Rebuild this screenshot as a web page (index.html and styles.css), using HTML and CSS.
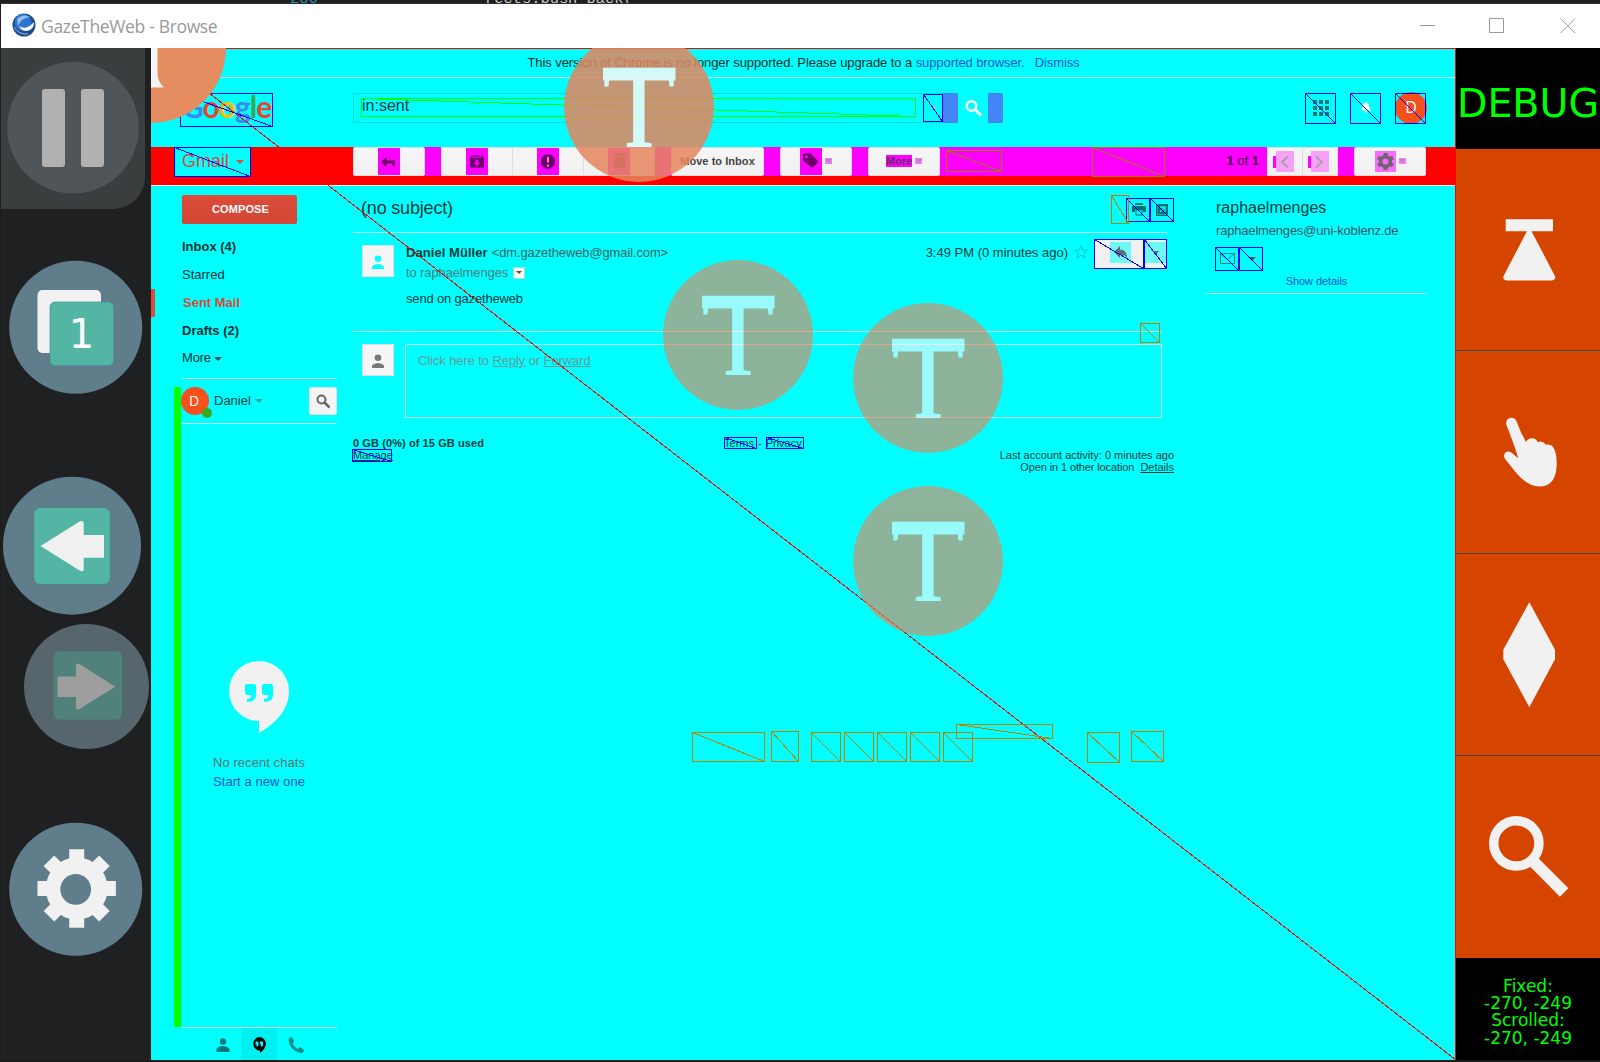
FILE: index.html
```html
<!DOCTYPE html>
<html lang="en">
<head>
<meta charset="utf-8">
<title>GazeTheWeb - Browse</title>
<link rel="stylesheet" href="styles.css">
</head>
<body>
<div class="desktop">
  <div class="editor"><span class="lineno">236</span><span class="code">rects.push_back(</span></div>
  <div class="window">
    <header class="titlebar">
      <svg class="appicon" viewBox="0 0 24 24"><circle cx="12" cy="12" r="11.500" fill="#1d4a92"/><circle cx="11" cy="9.500" r="8.500" fill="#2f74cf"/><path d="M5 6Q11 0 18 4Q9 5 6 13Z" fill="#8fbdf2"/><path d="M7 13Q14 18 22 9Q22 17 15 18Q9 18 7 13Z" fill="#f4f8ff"/><path d="M2 14Q7 22 16 21" stroke="#9bb9e0" fill="none"/></svg>
      <span class="title">GazeTheWeb - Browse</span>
      <svg class="winctl" viewBox="1420 17 156 17"><g fill="none" stroke="#999"><path d="M1420 25.500h15M1489.500 18.500h14v14h-14z"/><path d="M1560.500 18.500l14.500 14.500M1575 18.500l-14.500 14.500"/></g></svg>
    </header>
    <div class="body">
      <aside class="side">
        <svg class="pause" viewBox="1 48 144 161"><circle cx="73" cy="127.700" r="65.800" fill="#50555a"/><g fill="#b1b1b1"><rect x="42" y="89" width="23" height="78" rx="3"/><rect x="81" y="89" width="23" height="78" rx="3"/></g></svg>
        <svg viewBox="1 209 150 231" height="231"><circle cx="75.700" cy="327.300" r="66.500" fill="#607d8b"/><rect x="37.500" y="290" width="63.500" height="63" rx="5" fill="#f1f1f1"/><rect x="50" y="302" width="63.500" height="63.500" rx="5" fill="#53b6a5" stroke="#4a8f8b" stroke-width=".7"/><text class="tabcount" x="81.500" y="348" text-anchor="middle">1</text></svg>
        <svg viewBox="1 440 150 179" height="179"><circle cx="72" cy="545.700" r="69" fill="#607d8b"/><rect x="33.700" y="507.500" width="76.700" height="77" rx="7" fill="#53b6a5" stroke="#4a7f85" stroke-width=".7"/><path d="M40.500 546L80 521.300Q83.700 520 83.700 523.500V535H104V557.700H83.700V569.500Q83.700 572 80 570.700Z" fill="#f1f1f1"/></svg>
        <svg viewBox="1 619 150 161" height="161"><circle cx="86.500" cy="686.500" r="62.500" fill="#57666d"/><rect x="53" y="650.700" width="69.500" height="69.500" rx="6.500" fill="#50817a" stroke="#4b6a6a" stroke-width=".7"/><path d="M115.300 686.700L79.500 664Q76 662.500 76 666V676.500H57.500V697H76V707.500Q76 710.500 79.500 709Z" fill="#9e9e9e"/></svg>
        <svg viewBox="1 780 150 280" height="280"><circle cx="75.700" cy="889.300" r="66.500" fill="#607d8b"/><g fill="#f1f1f1" transform="translate(76.700 888.500)"><circle r="31"/><path d="M-7.500 -39.200h15V39.200h-15z"/><path d="M-7.500 -39.200h15V39.200h-15z" transform="rotate(45)"/><path d="M-7.500 -39.200h15V39.200h-15z" transform="rotate(90)"/><path d="M-7.500 -39.200h15V39.200h-15z" transform="rotate(135)"/></g><circle cx="75.700" cy="889.300" r="15.400" fill="#607d8b"/></svg>
      </aside>

      <main class="web">
        <div class="notice"><span class="ntext">This version of Chrome is no longer supported. Please upgrade to a <a>supported browser</a><a>.</a></span><a class="dismiss">Dismiss</a></div>
        <div class="head">
          <div class="logo"><span class="b">G</span><span class="r">o</span><span class="y">o</span><span class="b">g</span><span class="g">l</span><span class="r">e</span></div>
          <div class="search">in:sent</div>
          <svg class="drop" viewBox="0 0 20 30"><path d="M7 13h7l-3.500 4z" fill="#aabdbd"/></svg>
          <div class="sbtn"><svg viewBox="0 0 30 30"><circle cx="13.500" cy="13" r="4.800" fill="none" stroke="#fff" stroke-width="2.500"/><path d="M17 16.500l6 6" stroke="#fff" stroke-width="3"/></svg></div>
          <svg class="apps" viewBox="0 0 16 16"><path d="M0 0h4v4H0zM6 0h4v4H6zM12 0h4v4h-4zM0 6h4v4H0zM6 6h4v4H6zM12 6h4v4h-4zM0 12h4v4H0zM6 12h4v4H6zM12 12h4v4h-4z" fill="#007878"/></svg>
          <svg class="bell" viewBox="0 0 10 11"><path d="M5 0Q8 1 8 4.500L10 8.500H0L2 4.500Q2 1 5 0ZM3.500 9h3L5 11z" fill="#fff"/></svg>
          <div class="avatar big">D</div>
        </div>
        <div class="bar">
          <div class="gmail">Gmail<i></i></div>
          <div class="tools">
            <div class="btn w72"><b class="ic"><svg viewBox="0 0 22 27"><path d="M3 14l5.500-5v3.500H17V18h-2.500v-2.500h-6V19z" fill="#6b006b"/></svg></b></div>
            <div class="group"><div class="btn"><b class="ic"><svg viewBox="0 0 22 27"><path d="M6 7.500h10l2 2.500v9.500H4V10zM6 9.500h10M9.800 11.500v3H7.500L11 18l3.500-3.500h-2.300v-3z" fill="#6b006b" fill-rule="evenodd"/><path d="M6 9.300h10" stroke="#f0f"/></svg></b></div><div class="btn"><b class="ic"><svg viewBox="0 0 22 27"><path d="M8 6.500h6l4 4v6l-4 4H8l-4-4v-6z" fill="#6b006b"/><path d="M11 9v5.500M11 16.500v2" stroke="#e8c" stroke-width="2"/></svg></b></div><div class="btn"><b class="ic"><svg viewBox="0 0 22 27"><path d="M5 6h4l1-1h3l1 1h4v2H5zM6 9h11v11H6z" fill="#6b006b"/></svg></b></div></div>
            <div class="btn w93"><span class="move">Move to Inbox</span></div>
            <div class="btn w72"><b class="ic"><svg viewBox="0 0 22 27"><path d="M3 6l7-1 8.500 8.500-6 6.500L3 12.500z" fill="#6b006b"/><circle cx="6.500" cy="8.800" r="1.600" fill="#f0f"/></svg></b><i class="car"></i></div>
            <div class="btn w72"><b class="more">More</b><i class="car"></i></div>
            <span class="count"><b>1</b> of <b>1</b></span>
            <div class="group pager"><div class="btn"><b class="strip"></b><b class="pale"><svg viewBox="0 0 18 21"><path d="M12 5.500l-6 5.500 6 5.500" fill="none" stroke="#a8a0a8" stroke-width="2"/></svg></b></div><div class="btn"><b class="strip"></b><b class="pale"><svg viewBox="0 0 18 21"><path d="M5 5.500l6 5.500-6 5.500" fill="none" stroke="#a8a0a8" stroke-width="2"/></svg></b></div></div>
            <div class="btn w72 gearbtn"><b class="gbg"><svg viewBox="0 0 21 21"><circle cx="10.500" cy="10.500" r="4.800" fill="none" stroke="#6d6670" stroke-width="3.500"/><path d="M10.500 2v3M10.500 16v3M3 6.500l3 1.500M15 13l3 1.500M3 14.500l3-1.500M15 8l3-1.500" stroke="#6d6670" stroke-width="4"/></svg></b><i class="car"></i></div>
          </div>
        </div>

        <div class="content">
          <nav class="nav">
            <div class="compose">COMPOSE</div>
            <ul class="folders">
              <li><b>Inbox (4)</b></li>
              <li>Starred</li>
              <li class="current"><b>Sent Mail</b></li>
              <li><b>Drafts (2)</b></li>
              <li>More<i></i></li>
            </ul>
            <div class="chat">
              <div class="me"><div class="avatar small">D<i></i></div><span>Daniel</span><i class="tri"></i><div class="find"><svg viewBox="0 0 28 28"><circle cx="12.500" cy="12.500" r="4" fill="none" stroke="#666" stroke-width="2"/><path d="M15.500 15.500l5 5" stroke="#666" stroke-width="2.500"/></svg></div></div>
              <div class="chats">
                <svg viewBox="0 0 60 72" width="60" height="72"><path d="M30 0a30 30 0 0 1 30 30C60 50 45 63 30 72V60A30 30 0 0 1 30 0Z" fill="#f1f1f1"/><path d="M16 25q0-2 2-2h7q2 0 2 2v9q0 7-9 7v-3q4 0 4.500-4H18q-2 0-2-2zM33 25q0-2 2-2h7q2 0 2 2v9q0 7-9 7v-3q4 0 4.500-4H35q-2 0-2-2z" fill="#0ff"/></svg>
                <span class="norecent">No recent chats</span>
                <a>Start a new one</a>
              </div>
            </div>
            <div class="chattabs">
              <svg viewBox="0 0 14 14"><circle cx="7" cy="3.500" r="3.200" fill="#007a7a"/><path d="M.5 14v-3q2-3 6.500-3t6.500 3v3z" fill="#007a7a"/></svg>
              <div class="on"><svg viewBox="0 0 14 16"><path d="M7 0a6.800 6.800 0 0 1 6.900 6.800Q13.500 12 8 16V13.700A6.900 6.900 0 0 1 7 0Z" fill="#000"/><path d="M3.500 4.500h3v4l-2 1.500V7.500h-1zM8 4.500h3v4L9 10V7.500H8z" fill="#0ff"/></svg></div>
              <svg viewBox="0 0 16 16"><path d="M1 1l3-1 2.500 4.500-2 2q2 4 5.500 5.500l2-2L16 13l-1 3Q8 16 3.500 10.500Q-.5 5.500 1 1Z" fill="#0c8f8f"/></svg>
            </div>
          </nav>

          <section class="thread">
            <div class="subject"><h1>(no subject)</h1><svg class="print" viewBox="0 0 14 13"><path d="M3 0h8v2H3zM0 3h14v6h-3V7H3v2H0zM3.500 7.500h7v5h-7z" fill="#007070"/><path d="M4.500 8h5v3.500h-5z" fill="#0ff"/></svg><svg class="newwin" viewBox="0 0 12 12"><path d="M0 0h12v12H0z" fill="#007070"/><path d="M4 3h5v5M9 3L4 8" stroke="#0ff" fill="none" stroke-width="1.300"/><path d="M1.500 0v10.500H12" stroke="#4cc" stroke-width=".6" fill="none"/></svg></div>
            <article class="msg">
              <div class="face"><svg viewBox="0 0 14 14"><circle cx="7" cy="3.800" r="3.300" fill="#0ff"/><path d="M1 14v-2.500q2-2.500 6-2.500t6 2.500V14z" fill="#0ff"/></svg></div>
              <div class="mbody">
                <div class="from"><b>Daniel Müller</b><span class="addr">&lt;dm.gazetheweb@gmail.com&gt;</span><span class="time">3:49 PM (0 minutes ago)</span>
                  <svg class="star" viewBox="0 0 16 16"><path d="M8 1.500l1.700 4.700h4.800l-3.900 3 1.500 4.800L8 11.200 3.900 14l1.500-4.800-3.900-3h4.800z" fill="none" stroke="#00c4c8"/></svg>
                  <div class="reply"><b><svg viewBox="0 0 21 21"><path d="M4 10l6-6v3.500q7 0 7 8.500-2-3.500-7-3.500V16z" fill="#5f7070"/></svg></b><b><svg viewBox="0 0 22 21"><path d="M8 9h6l-3 4z" fill="#5f7070"/></svg></b></div>
                </div>
                <div class="to">to raphaelmenges<i></i></div>
                <p>send on gazetheweb</p>
              </div>
            </article>
            <div class="respond">
              <div class="face"><svg viewBox="0 0 14 14"><circle cx="7" cy="3.800" r="3.300" fill="#777"/><path d="M1 14v-2.500q2-2.500 6-2.500t6 2.500V14z" fill="#777"/></svg></div>
              <div class="rbox">Click here to <u>Reply</u> or <u>Forward</u></div>
            </div>
            <footer class="foot">
              <div class="quota"><b>0 GB (0%) of 15 GB used</b><br><u>Manage</u></div>
              <div class="legal"><u>Terms</u><span>-</span><u>Privacy</u></div>
              <div class="activity">Last account activity: 0 minutes ago<br><span class="loc">Open in 1 other location</span>&nbsp; <u>Details</u></div>
            </footer>
          </section>

          <section class="people">
            <h2>raphaelmenges</h2>
            <div class="mail">raphaelmenges@uni-koblenz.de</div>
            <div class="acts"><svg viewBox="0 0 15 11" width="15" height="11"><path d="M.5.5h14v10H.5zl7 6 7-6" fill="none" stroke="#0a8080"/></svg><i></i></div>
            <a>Show details</a>
          </section>
        </div>

        <!-- debug rectangles of detected page elements, and the gaze typing buttons -->
        <svg class="overlay" viewBox="151 48 1305 1012">
          <defs><clipPath id="stem"><path d="M-40 -45H40V0H12.700V45H-12.300V0H-40Z"/></clipPath></defs>
          <g fill="none" shape-rendering="crispEdges">
            <path class="fixed" d="M151 48.500H1455.500V1060"/>
            <path class="fixed" d="M151 48L273 142.600L278.700 147M327.700 185L1456 1060"/>
            <path class="link" d="M180.500 93.500h92v33h-92zl92 33M174.500 147.500h76v29h-76zl76 29M923.500 94.500h19v27h-19zl19 27M1305.500 93.500h30v30h-30zl30 30M1350.500 93.500h30v30h-30zl30 30M1395.500 93.500h30v30h-30zl30 30"/>
            <path class="link" d="M1126.500 198.500h23v23h-23zl23 23M1150.500 198.500h23v23h-23zl23 23M1094.500 239.500h49v29h-49zl49 29M1144.500 239.500h22v29h-22zl22 29M1215.500 247.500h23v23h-23zl23 23M1239.500 247.500h23v23h-23zl23 23"/>
            <path class="link" d="M724.500 437.500h32v11h-32zl32 11M766.500 437.500h37v11h-37zl37 11M352.500 449.500h39v12h-39zl39 12"/>
            <path class="field" d="M361.500 98.500h554v18h-554zl554 18"/>
            <path class="faint" d="M946.500 150.500h55v21h-55zl55 21M1092.500 147.500h72v29h-72zl72 29"/>
            <path class="hidden" d="M1111.500 195.500h17v28h-17zl17 28M1140.500 323.500h19v19h-19zl19 19M692.500 732.500h72v29h-72zl72 29M771.500 731.500h27v30h-27zl27 30M811.500 732.500h29v29h-29zl29 29M844.500 732.500h29v29h-29zl29 29M877.500 732.500h29v29h-29zl29 29M910.500 732.500h29v29h-29zl29 29M943.500 732.500h29v29h-29zl29 29M956.500 724.500h96v14h-96zl96 14M1087.500 732.500h32v30h-32zl32 30M1131.500 731.500h32v30h-32zl32 30"/>
          </g>
          <g><circle cx="151" cy="48" r="75" fill="#e68c61"/><path d="M151 48h6.500v26q.5 8 6.500 13.500h-13z" fill="#f4f4f4"/></g>
          <g class="key" opacity=".85" transform="translate(639 107)"><circle r="75"/><rect x="-36" y="-39.300" width="72.500" height="12.800"/><text y="40">T</text></g>
          <g class="key" opacity=".61" transform="translate(738 335)"><circle r="75"/><rect x="-36" y="-39.300" width="72.500" height="12.800"/><text y="40">T</text></g>
          <g class="key" opacity=".61" transform="translate(928 378)"><circle r="75"/><rect x="-36" y="-39.300" width="72.500" height="12.800"/><text y="40">T</text></g>
          <g class="key" opacity=".61" transform="translate(928 561)"><circle r="75"/><rect x="-36" y="-39.300" width="72.500" height="12.800"/><text y="40">T</text></g>
        </svg>
      </main>

      <aside class="right">
        <div class="debug">DEBUG</div>
        <div class="panel"><svg viewBox="1456 149 144 201"><path d="M1505.700 219h47.300v12h-21.500L1555 276q1 4-3 4.300h-45.500q-4-.3-3-4.300L1527 231h-21.300z" fill="#f1f1f1"/></svg></div>
        <div class="panel"><svg viewBox="168 513 432 606"><path d="M318 733Q318 714 334 714Q345 714 350 726Q360 755 378 787Q384 775 397 776Q409 777 413 788Q426 780 438 795Q454 793 460 803Q472 822 470 860Q467 921 418 921Q384 921 350 882L315 838Q309 828 315 820Q323 812 334 819L354 836Q350 815 318 733Z" fill="#f1f1f1"/></svg></div>
        <div class="panel"><svg viewBox="1456 554 144 201"><path d="M1529.300 602L1555 649.500V659L1529.300 707L1503.300 659V649.500Z" fill="#f1f1f1"/></svg></div>
        <div class="panel"><svg viewBox="1456 756 144 202"><circle cx="1516.300" cy="843.700" r="22.700" fill="none" stroke="#f1f1f1" stroke-width="9.500"/><path d="M1534 862.500L1564.300 893" stroke="#f1f1f1" stroke-width="12"/></svg></div>
        <div class="coords">Fixed:<br>-270, -249<br>Scrolled:<br>-270, -249</div>
      </aside>
    </div>
  </div>
</div>
</body>
</html>
```
FILE: styles.css
```css
* { box-sizing: border-box; }
body { margin: 0; background: #1e1e1e; overflow: hidden; font: 13px "Liberation Sans", Arial, sans-serif; color: #053c3c; }
svg { display: block; flex: none; }
b.ic, b.pale, b.gbg { display: block; }
i { font-style: normal; }
.desktop { width: 1600px; height: 1062px; background: #1e1e1e; border-bottom: 1px solid #1a1a1a; padding-left: 1px; }
.editor { height: 4px; overflow: hidden; display: flex; font: 15.400px "Liberation Mono", monospace; line-height: 15px; border-bottom: 1px solid #333; }
.editor span { margin-top: -8px; }
.lineno { color: #2b91af; margin-left: 289px; width: 195px; }
.code { color: #c8c8c8; }
.window { height: 1056px; display: flex; flex-direction: column; }
.titlebar { height: 44px; background: #fff; display: flex; align-items: center; padding: 0 24px 0 11px; flex: none; }
.appicon { width: 24px; height: 24px; margin-top: -2px; }
.title { font: 17.500px "Open Sans", "Noto Sans", sans-serif; color: #999; margin-left: 5px; margin-right: auto; letter-spacing: -.340px; }
.winctl { width: 156px; height: 17px; margin-top: -1px; }
.body { display: flex; height: 1012px; }

.side { width: 150px; background: #1f2022; flex: none; }
.side svg { width: 150px; }
.side .pause { width: 144px; height: 161px; background: #3b3e3f; border-bottom-right-radius: 32px; }
.tabcount { font: 40px "DejaVu Sans", sans-serif; fill: #fff; }

.web { width: 1305px; background: #0ff; display: flex; flex-direction: column; position: relative; overflow: hidden; flex: none; }
.web a { color: #1155cc; }
.notice { height: 30px; border-bottom: 1px solid #c5dede; display: flex; justify-content: center; line-height: 29px; color: #042c2c; padding-right: 0; }
.ntext { letter-spacing: -.085px; }
.dismiss { margin-left: 10px; letter-spacing: -.1px; }
.head { height: 69px; display: flex; align-items: flex-start; padding-top: 15px; flex: none; }
.logo { margin-left: 31px; width: 171px; font: bold 30px "Lato", sans-serif; line-height: 30px; margin-top: -2px; letter-spacing: -1px; }
.logo .b { color: #4285f4; } .logo .r { color: #ea4335; } .logo .y { color: #fbbc05; } .logo .g { color: #34a853; }
.search { width: 570px; height: 30px; border: 1px solid #00dada; border-right: 0; padding-left: 8px; font-size: 16px; line-height: 24px; }
.drop { width: 20px; height: 30px; border: solid #00dada; border-width: 1px 0; }
.sbtn { width: 60px; height: 30px; border-left: 15px solid #4585f3; border-right: 15px solid #4585f3; border-radius: 0 2px 2px 0; }
.apps { width: 16px; height: 16px; margin: 7px 0 0 310px; }
.bell { width: 10px; height: 11px; margin: 9px 0 0 32px; }
.avatar { background: #f4511e; border-radius: 50%; color: #fff; text-align: center; flex: none; }
.avatar.big { width: 32px; height: 32px; margin: -1px 0 0 24px; font: 16px "Open Sans", sans-serif; line-height: 31px; }
.bar { height: 39px; background: #f00; border-bottom: 1px solid #d8f0e0; display: flex; flex: none; }
.gmail { width: 77px; height: 30px; margin: 0 102px 0 23px; background: #0ff; color: #dd4b39; font-size: 18px; line-height: 29px; padding-left: 8px; display: flex; }
.gmail i, .folders i, .tri, .acts i { border: 4px solid transparent; border-top-color: currentColor; border-bottom: 0; }
.gmail i { margin: 13px 0 0 7px; }
.tools { width: 1073px; height: 29px; background: #f0f; display: flex; }
.btn { height: 29px; background: linear-gradient(#f6f6f6, #f0f0f0); border: 1px solid #dcdcdc; border-radius: 2px; display: flex; align-items: center; justify-content: center; color: #444; font: bold 11px "Liberation Sans", Arial, sans-serif; }
.move { letter-spacing: .050px; padding-bottom: 2px; }
.w72 { width: 72px; } .w93 { width: 93px; }
.tools > div { margin-right: 16px; flex: none; }
.group { display: flex; }
.group .btn { width: 72px; margin-right: -1px; border-radius: 0; }
.group .btn:last-child { margin-right: 0; }
.ic { width: 22px; height: 27px; background: #f0f; }
.car { width: 7px; height: 6px; background: #f57af5; margin: -1px 0 0 3px; border: 0; display: flex; justify-content: center; padding-top: 1px; }
.car::after { content: ""; border: 3px solid transparent; border-top: 4px solid #b08ab0; border-bottom: 0; }
.more { background: #f0f; height: 12px; line-height: 12px; color: #603060; margin-top: -1px; }
.count { margin-left: auto; margin-right: 8px; line-height: 28px; color: #400040; font-size: 13px; }
.pager .btn { width: 36px; padding-right: 4px; }
.strip { width: 3px; height: 12px; background: #f0f; }
.pale { width: 18px; height: 21px; background: #f8a0f8; }
.tools > .pager { width: 71px; }
.tools > .gearbtn { margin-right: 0; }
.gbg { width: 21px; height: 21px; background: #f86cf8; }

.content { display: flex; flex: 1; min-height: 0; }
.nav { width: 202px; padding: 9px 16px 0 0; display: flex; flex-direction: column; }
.compose { width: 115px; height: 29px; margin-left: 31px; background: linear-gradient(#dd4b39, #d14836); border-radius: 2px; color: #fff; font-weight: bold; font-size: 11px; line-height: 28px; text-align: center; letter-spacing: .1px; padding-left: 2px; }
.folders { list-style: none; margin: 9px 0 0; padding: 0; height: 145px; }
.folders li { height: 28px; line-height: 27px; padding-left: 31px; display: flex; color: #063030; }
.folders li:last-child { line-height: 26px; letter-spacing: -.2px; }
.folders .current { color: #dd4b39; border-left: 4px solid #dd4b39; padding-left: 28px; }
.folders i { margin: 12px 0 0 3px; color: #455; height: 4px; }
.chat { margin: 9px 0 0 23px; border-left: 7px solid #0f0; flex: 1; }
.chat::before { content: ""; display: block; height: 1px; background: #c8e4e4; margin-top: -9px; margin-bottom: 8px; }
.me { height: 37px; border-bottom: 1px solid #c8e4e4; display: flex; line-height: 28px; }
.avatar.small { width: 28px; height: 28px; position: relative; font: 14px "Open Sans", sans-serif; line-height: 28px; padding-right: 2px; }
.avatar.small i { position: absolute; width: 10px; height: 10px; border-radius: 50%; background: #3aa81e; right: -3px; bottom: -3px; }
.me span { margin-left: 5px; }
.tri { margin: 12px 0 0 4px; color: #1ea5a5; height: 4px; }
.find { width: 28px; height: 28px; background: #f4f4f4; border: 1px solid #ddd; border-radius: 2px; margin-left: auto; }
.find svg { margin: -1px; width: 28px; }
.chats { padding-top: 237px; display: flex; flex-direction: column; align-items: center; line-height: 18.500px; letter-spacing: .060px; }
.norecent { color: #5b7575; margin-top: 21px; }
.chattabs { margin-left: 30px; height: 33px; border-top: 1px solid #c8e4e4; display: flex; padding-left: 35px; align-items: center; }
.chattabs > svg { width: 14px; height: 16px; margin-top: 2px; }
.chattabs .on { width: 36px; height: 32px; margin: 0 11px 0 11px; background: #00f0f0; display: flex; justify-content: center; align-items: center; padding-top: 1px; }
.on svg { width: 14px; height: 16px; }
.chattabs > svg:last-child { width: 16px; }

.thread { width: 821px; }
.subject { height: 47px; width: 814px; border-bottom: 1px solid #c8dcdc; display: flex; padding-left: 8px; }
h1 { margin: 0 auto 0 0; font-size: 18px; font-weight: normal; line-height: 44px; letter-spacing: -.180px; }
.print { width: 14px; height: 13px; margin: 17px 10px 0 0; }
.newwin { width: 12px; height: 12px; margin: 18px -1px 0 0; }
.msg { display: flex; width: 814px; height: 98px; }
.face { width: 32px; height: 32px; background: #f5f5f5; border: 1px solid #ddd; margin: 12px 12px 0 9px; display: flex; align-items: center; justify-content: center; flex: none; }
.face svg { width: 14px; height: 14px; margin-top: 2px; }
.mbody { flex: 1; padding-top: 10px; }
.from { display: flex; height: 19px; line-height: 19px; }
.from b { letter-spacing: .060px; }
.addr { margin-left: 4px; color: #3c6464; letter-spacing: -.120px; }
.time { margin-left: auto; }
.star { width: 16px; height: 16px; margin: 1px 5px 0 5px; }
.reply { width: 73px; height: 30px; background: #f0f0f0; margin-top: -4px; padding: 3px 0 0 16px; display: flex; }
.reply b { width: 21px; height: 21px; background: #6ff8f8; margin-right: 14px; }
.reply b:last-child { width: 22px; margin: 0; }
.to { height: 22px; line-height: 22px; color: #4a8080; display: flex; letter-spacing: -.120px; }
.to i { width: 12px; height: 12px; background: #f8f8f8; margin: 5px 0 0 5px; border: 1px solid #9dd; padding: 3px 2px; }
.to i::after { content: ""; display: block; border: 3px solid transparent; border-top-color: #555; border-bottom: 0; }
.mbody p { margin: 5px 0 0; line-height: 20px; letter-spacing: -.170px; }
.respond { display: flex; width: 809px; border-top: 1px solid #c8dcdc; height: 87px; }
.rbox { flex: 1; margin: 12px 0 0 -1px; height: 74px; border: 1px solid #c8dcdc; padding: 8px 12px; line-height: 16px; color: #699; letter-spacing: -.100px; }
.foot { display: flex; font-size: 11px; line-height: 12px; padding-top: 18.500px; }
.quota b { letter-spacing: .090px; }
.legal { margin-left: 240px; }
.legal span { margin: 0 4px; }
.activity { margin: 12px 0 0 auto; text-align: right; }
.loc { letter-spacing: -.120px; }
.people { width: 220px; margin-left: 32px; height: 108px; border-bottom: 1px solid #c8e4e4; padding-left: 10px; }
h2 { margin: 0; font-weight: normal; font-size: 16px; line-height: 44px; height: 36px; }
.mail { line-height: 18px; color: #356; letter-spacing: -.180px; }
.acts { display: flex; margin: 13px 0 0 4px; height: 19px; }
.acts i { margin: 4px 0 0 13px; height: 4px; color: #355; }
.people a { display: block; text-align: center; font-size: 11px; line-height: 18px; padding-right: 9px; letter-spacing: -.080px; }

.overlay { position: absolute; left: 0; top: 0; width: 1305px; height: 1012px; }
.fixed { stroke: #f00; } .link { stroke: #00f; } .field { stroke: #0f0; } .faint { stroke: #a07810; } .hidden { stroke: #b98200; }
.key circle { fill: #e6865d; }
.key rect, .key text { fill: #f8f8f8; }
.key text { font: 120px "Liberation Serif", serif; text-anchor: middle; clip-path: url(#stem); }

.right { width: 144px; background: #000; color: #0f0; font-family: "DejaVu Sans", sans-serif; flex: none; }
.debug { height: 101px; font-size: 39.500px; line-height: 110px; text-align: center; white-space: nowrap; }
.panel { background: #d64500; border-bottom: 1px solid #444; }
.panel svg { width: 144px; height: 201.250px; }
.panel:nth-child(5) { border: 0; padding-bottom: 1px; }
.coords { font-size: 17px; line-height: 17.200px; text-align: center; padding-top: 20px; }
```
